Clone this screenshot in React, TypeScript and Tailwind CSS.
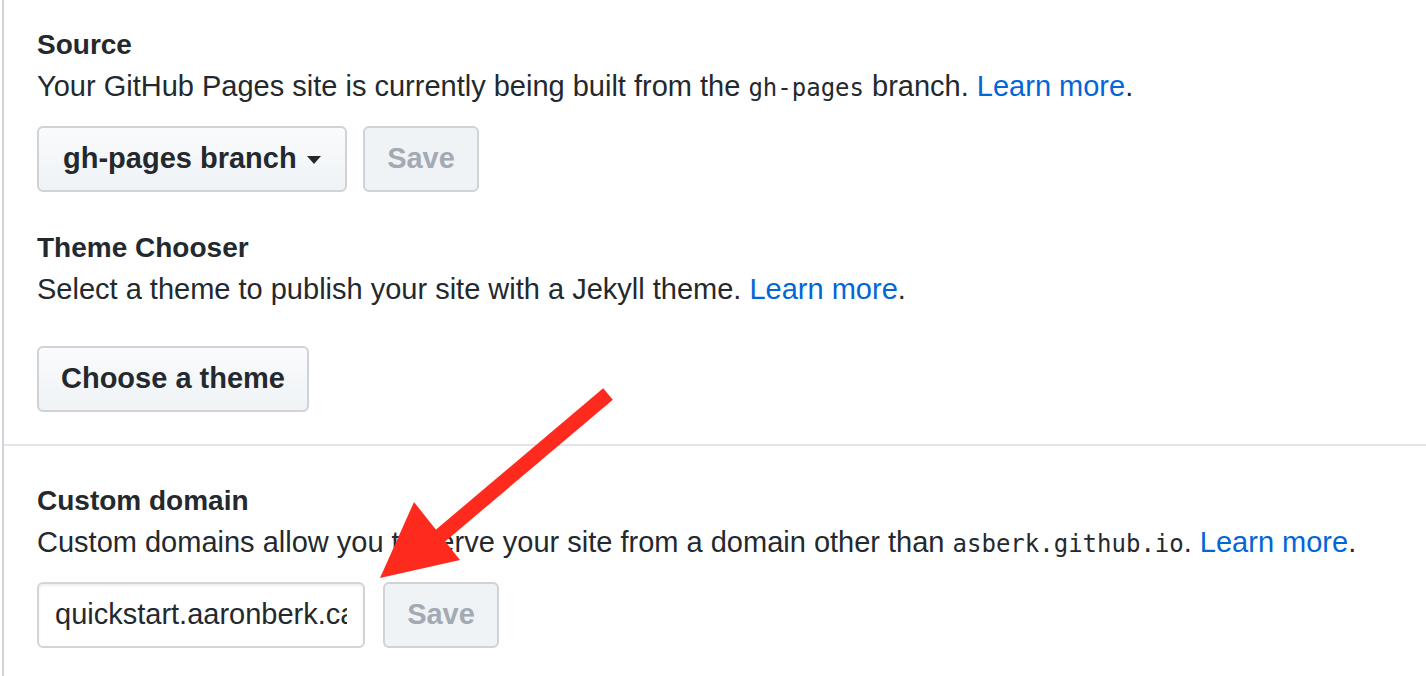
import React from "react";

const sans = { fontFamily: '"Liberation Sans", Arial, sans-serif' };
const mono = { fontFamily: '"DejaVu Sans Mono", "Liberation Mono", monospace' };

function Btn({ children, disabled, className = "" }: { children: React.ReactNode; disabled?: boolean; className?: string }) {
  return (
    <div
      className={
        "flex h-[66px] items-center rounded-[6px] border-2 border-[#cfd2d6] text-[29px] font-bold " +
        (disabled
          ? "bg-[#eff3f6] text-[#a3aab1] "
          : "bg-gradient-to-b from-[#fafbfc] to-[#eff3f6] text-[#24292e] ") +
        className
      }
    >
      {children}
    </div>
  );
}

export default function App() {
  return (
    <div className="relative h-[676px] w-[1426px] overflow-hidden bg-white text-[#24292e]" style={sans}>
      <div className="ml-[2px] h-full border-l-2 border-[#d1d5da]">
        <div className="border-b-2 border-[#e1e4e8] pb-[32px] pl-[33px] pt-[24px]">
          <div className="text-[28px] font-bold leading-[42px]">Source</div>
          <div className="text-[29px] leading-[41px]">
            Your GitHub Pages site is currently being built from the{" "}
            <span className="text-[24px]" style={mono}>gh-pages</span> branch.{" "}
            <span className="text-[#0366d6]">Learn more</span>.
          </div>
          <div className="mt-[17px] flex gap-[16px]">
            <Btn className="w-[310px] pl-[24px]">
              <span>gh-pages branch</span>
              <svg className="ml-[10px] mt-[2px]" width="14" height="8" viewBox="0 0 14 8">
                <path d="M0 0 L14 0 L7 8 Z" fill="#24292e" />
              </svg>
            </Btn>
            <Btn disabled className="w-[116px] justify-center">Save</Btn>
          </div>
          <div className="mt-[35px] text-[28px] font-bold leading-[42px]">Theme Chooser</div>
          <div className="text-[29px] leading-[41px]">
            Select a theme to publish your site with a Jekyll theme.{" "}
            <span className="text-[#0366d6]">Learn more</span>.
          </div>
          <div className="mt-[36px] flex">
            <Btn className="w-[272px] justify-center">Choose a theme</Btn>
          </div>
        </div>
        <div className="pl-[33px] pt-[34px]">
          <div className="text-[28px] font-bold leading-[42px]">Custom domain</div>
          <div className="text-[29px] leading-[41px]">
            Custom domains allow you to serve your site from a domain other than{" "}
            <span className="text-[24px]" style={mono}>asberk.github.io</span>.{" "}
            <span className="text-[#0366d6]">Learn more</span>.
          </div>
          <div className="mt-[17px] flex gap-[18px]">
            <div className="flex h-[66px] w-[328px] items-center overflow-hidden whitespace-nowrap rounded-[6px] border-2 border-[#d1d5da] bg-white px-[16px] text-[29px] shadow-[inset_0_2px_3px_rgba(27,31,35,0.075)]">
              <span className="block overflow-hidden">quickstart.aaronberk.ca</span>
            </div>
            <Btn disabled className="w-[116px] justify-center">Save</Btn>
          </div>
        </div>
      </div>
      <svg className="pointer-events-none absolute left-0 top-0" width="1426" height="676" viewBox="0 0 1426 676">
        <line x1="608" y1="394" x2="440" y2="536" stroke="#fe2a1e" strokeWidth="15" />
        <polygon points="380,578 414,502 460,560" fill="#fe2a1e" />
      </svg>
    </div>
  );
}
